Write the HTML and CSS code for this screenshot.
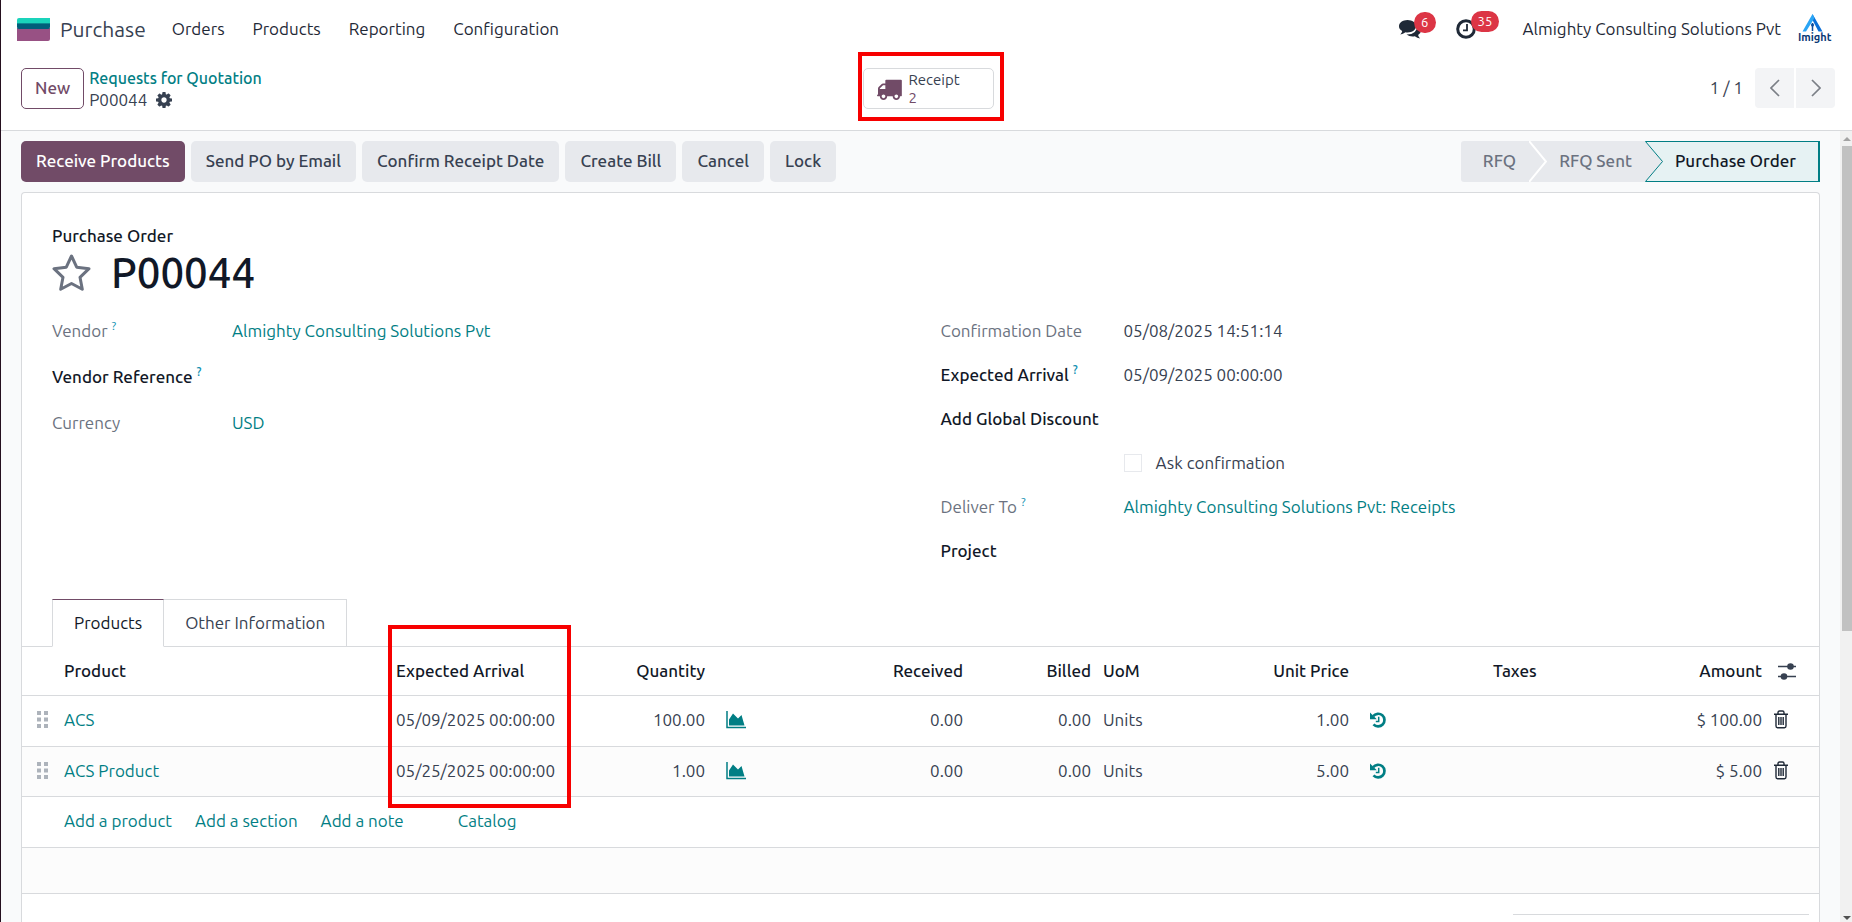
FILE: index.html
```html
<!DOCTYPE html>
<html lang="en">
<head>
<meta charset="utf-8">
<title>P00044 - Purchase</title>
<link rel="stylesheet" href="styles.css">
</head>
<body>
<svg class="defs" aria-hidden="true">
  <symbol id="i-area" viewBox="0 0 20 18"><path d="M1 0v16.500h19" fill="none" stroke="currentColor" stroke-width="1.500"/><path d="M3 14.500V8.500L7 2.500l5 5 3.500-3.500 3 10.500z" fill="currentColor"/></symbol>
  <symbol id="i-history" viewBox="0 0 16 18"><path d="M3.200 5.200A6.300 6.300 0 1 1 3.500 13.300" fill="none" stroke="currentColor" stroke-width="2.700"/><path d="M0 1.500v6.800h6.800z" fill="currentColor"/><path d="M8.700 5.800v4.700H5.800" fill="none" stroke="currentColor" stroke-width="1.500"/></symbol>
  <symbol id="i-trash" viewBox="0 0 14 19"><path d="M0 4.200h14M2 4.500V16q0 1.700 1.500 1.700h7q1.500 0 1.500-1.700V4.500M4 4V2.500Q4 1 5.500 1h3Q10 1 10 2.500V4M4.800 7v8M7 7v8M9.200 7v8" fill="none" stroke="currentColor" stroke-width="1.400"/></symbol>
  <symbol id="i-drag" viewBox="0 0 11 17"><path d="M0 0h4v4H0zM7 0h4v4H7zM0 6.500h4v4H0zM7 6.500h4v4H7zM0 13h4v4H0zM7 13h4v4H7z" fill="currentColor"/></symbol>
</svg>
<div class="app">
  <header class="navbar">
    <a class="brand" href="#">
      <svg class="brand-logo" viewBox="0 0 33 23" aria-hidden="true"><path d="M0 10h33v11q0 2-2 2H0z" fill="#985184"/><path d="M2 0h31v6H0V2q0-2 2-2z" fill="#1ad3bb"/><path d="M0 5h33v4q0 2-2 2H2q-2 0-2-2z" fill="#005e7a"/><path d="M0 5h33v1H0z" fill="#0b8a92"/></svg>
      <span>Purchase</span>
    </a>
    <nav class="menu">
      <a href="#">Orders</a><a href="#">Products</a><a href="#">Reporting</a><a href="#">Configuration</a>
    </nav>
    <div class="systray">
      <button class="tray chat" aria-label="Messages">
        <svg viewBox="0 0 22 19" aria-hidden="true"><path d="M8.500 0C13.300 0 17 2.800 17 6.300s-3.700 6.200-8.500 6.200q-1 0-2-.2Q4 14.300 1.300 14.500q1.700-1.500 1.900-3.400Q0 9.300 0 6.300C0 2.800 3.700 0 8.500 0z" fill="currentColor"/><path d="M18.500 5.500Q22 7 22 10.500q0 2.700-2.900 4.600.3 2 2 3.400-2.900-.2-5.300-2.200-5 .8-8.300-1.800 10.500.2 11-9z" fill="currentColor"/></svg>
        <span class="badge">6</span>
      </button>
      <button class="tray clock" aria-label="Activities">
        <svg viewBox="0 0 20 20" aria-hidden="true"><circle cx="10" cy="10" r="8.300" fill="none" stroke="currentColor" stroke-width="3"/><path d="M11 5v6.300H7" fill="none" stroke="currentColor" stroke-width="1.800"/></svg>
        <span class="badge">35</span>
      </button>
      <span class="company">Almighty Consulting Solutions Pvt</span>
      <button class="avatar" aria-label="User menu">
        <svg viewBox="0 0 34 30" aria-hidden="true"><path d="M14.500 0 24.500 17.500h-4L14.500 6z" fill="#0a6fd8"/><path d="M14.500 0 16.500 4 8 17.500H4.500z" fill="#2aa5f5"/><path d="M14.500 9v8" stroke="#0a4b9c" stroke-width="1.500"/><circle cx="14.500" cy="11" r="1.500" fill="#0a4b9c"/><text x="0" y="27" class="avatar-text">Imight</text></svg>
      </button>
    </div>
  </header>

  <div class="control">
    <div class="control-left">
      <button class="btn-new">New</button>
      <div class="crumbs">
        <a href="#">Requests for Quotation</a>
        <div class="crumb-now"><span>P00044</span>
          <button class="gear" aria-label="Actions"><svg viewBox="0 -128 1536 1536" aria-hidden="true"><path fill="currentColor" fill-rule="evenodd" d="M1024 640q0 106-75 181t-181 75-181-75-75-181 75-181 181-75 181 75 75 181zM1536 531v222q0 12-8 23t-20 13l-185 28q-19 54-39 91 35 50 107 138 10 12 10 25t-9 23q-27 37-99 108t-94 71q-12 0-26-9l-138-108q-44 23-91 38-16 136-29 186-7 28-36 28h-222q-14 0-24.500-8.500t-11.500-21.500l-28-184q-49-16-90-37l-141 107q-10 9-25 9-14 0-25-11-126-114-165-168-7-10-7-23 0-12 8-23 15-21 51-66.500t54-70.500q-27-50-41-99l-183-27q-13-2-21-12.500t-8-23.500v-222q0-12 8-23t19-13l186-28q14-46 39-92-40-57-107-138-10-12-10-24 0-10 9-23 26-36 98.500-107.500t94.500-71.500q13 0 26 10l138 107q44-23 91-38 16-136 29-186 7-28 36-28h222q14 0 24.500 8.500t11.500 21.500l28 184q49 16 90 37l142-107q9-9 24-9 13 0 25 10 129 119 165 170 7 8 7 22 0 12-8 23-15 21-51 66.500t-54 70.500q26 50 41 98l183 28q13 2 21 12.500t8 23.500z"/></svg></button>
        </div>
      </div>
    </div>
    <button class="stat">
      <svg viewBox="0 128 1792 1536" aria-hidden="true"><path fill="currentColor" d="M640 1408q0-52-38-90t-90-38-90 38-38 90 38 90 90 38 90-38 38-90zm-384-512h384v-256h-158q-13 0-22 9l-195 195q-9 9-9 22v30zm1280 512q0-52-38-90t-90-38-90 38-38 90 38 90 90 38 90-38 38-90zm256-1088v1024q0 15-4 26.500t-13.500 18.500-16.500 11.500-23.500 6-22.500 2-25.500 0-22.500-.500q0 106-75 181t-181 75-181-75-75-181h-384q0 106-75 181t-181 75-181-75-75-181h-64q-3 0-22.500.500t-25.500 0-22.500-2-23.500-6-16.500-11.500-13.500-18.500-4-26.500q0-26 19-45t45-19v-320q0-8-.500-35t0-38 2.500-34.500 6.500-37 14-30.500 22.500-30l198-198q19-19 50.500-32t58.500-13h160v-192q0-26 19-45t45-19h1024q26 0 45 19t19 45z"/></svg>
      <span class="stat-text"><span>Receipt</span><span class="stat-value">2</span></span>
    </button>
    <div class="pager">
      <span>1 / 1</span>
      <button class="prev" aria-label="Previous"><svg viewBox="0 0 10 18" aria-hidden="true"><path d="M9 1 1 9l8 8" fill="none" stroke="currentColor" stroke-width="1.700"/></svg></button>
      <button class="next" aria-label="Next"><svg viewBox="0 0 10 18" aria-hidden="true"><path d="m1 1 8 8-8 8" fill="none" stroke="currentColor" stroke-width="1.700"/></svg></button>
    </div>
  </div>

  <div class="content">
    <main class="form">
      <div class="statusrow">
        <div class="actions">
          <button class="btn primary">Receive Products</button>
          <button class="btn">Send PO by Email</button>
          <button class="btn">Confirm Receipt Date</button>
          <button class="btn">Create Bill</button>
          <button class="btn">Cancel</button>
          <button class="btn">Lock</button>
        </div>
        <div class="stages">
          <button class="stage first">RFQ</button>
          <svg class="chevron" viewBox="0 0 18 41" preserveAspectRatio="none" aria-hidden="true"><path d="M0 0h18v41H0z" fill="#e7e9ed"/><path d="M0 0l17 20.500L0 41" fill="none" stroke="#fff" stroke-width="2"/></svg>
          <button class="stage">RFQ Sent</button>
          <svg class="chevron" viewBox="0 0 18 41" preserveAspectRatio="none" aria-hidden="true"><path d="M0 0h18v41H0z" fill="#e6f2f3"/><path d="M0 0l17.500 20.500L0 41z" fill="#e7e9ed"/><path d="M18 .500H.500L17.500 20.500.500 40.500H18" fill="none" stroke="#017e84" stroke-width="1"/></svg>
          <button class="stage current" aria-current="step">Purchase Order</button>
        </div>
      </div>

      <section class="sheet">
        <div class="sheet-body">
          <div class="doc-type">Purchase Order</div>
          <div class="title-row">
            <button class="star" aria-label="Priority"><svg viewBox="0 0 39 39" aria-hidden="true"><path d="M19.500 2l5.200 11.200 12.300 1.500-9 8.600 2.300 12-10.800-5.800-10.800 5.800 2.300-12-9-8.600 12.300-1.500z" fill="none" stroke="currentColor" stroke-width="3" stroke-linejoin="round"/></svg></button>
            <h1>P00044</h1>
          </div>
          <div class="groups">
            <dl class="group left">
              <dt class="muted">Vendor <sup>?</sup></dt><dd><a href="#">Almighty Consulting Solutions Pvt</a></dd>
              <dt>Vendor Reference <sup>?</sup></dt><dd></dd>
              <dt class="muted">Currency</dt><dd><a href="#">USD</a></dd>
            </dl>
            <dl class="group right">
              <dt class="muted">Confirmation Date</dt><dd>05/08/2025 14:51:14</dd>
              <dt>Expected Arrival <sup>?</sup></dt><dd>05/09/2025 00:00:00</dd>
              <dt>Add Global Discount</dt><dd></dd>
              <dt></dt><dd><label class="check"><input type="checkbox">Ask confirmation</label></dd>
              <dt class="muted">Deliver To <sup>?</sup></dt><dd><a href="#">Almighty Consulting Solutions Pvt: Receipts</a></dd>
              <dt>Project</dt><dd></dd>
            </dl>
          </div>
        </div>
        <div class="tabs" role="tablist">
          <button class="tab active" role="tab" aria-selected="true">Products</button>
          <button class="tab" role="tab" aria-selected="false">Other Information</button>
        </div>
        <table class="lines">
          <colgroup><col class="c-drag"><col><col class="c-date"><col class="c-qty"><col class="c-chart"><col class="c-recv"><col class="c-bill"><col class="c-uom"><col class="c-price"><col class="c-hist"><col class="c-tax"><col class="c-amt"><col class="c-act"></colgroup>
          <thead><tr>
            <th></th><th>Product</th><th class="marked">Expected Arrival</th><th class="num">Quantity</th><th></th><th class="num">Received</th><th class="num">Billed</th><th>UoM</th><th class="num">Unit Price</th><th></th><th>Taxes</th><th class="num">Amount</th>
            <th class="icon"><button class="icon-btn" aria-label="Optional columns"><svg class="sliders" viewBox="0 0 18 19" aria-hidden="true"><path d="M0 4.500h18M0 14.500h18" stroke="currentColor" stroke-width="1.600"/><circle cx="12.500" cy="4.500" r="3.300" fill="currentColor"/><circle cx="6" cy="14.500" r="3.300" fill="currentColor"/></svg></button></th>
          </tr></thead>
          <tbody>
            <tr>
              <td class="drag"><svg aria-hidden="true"><use href="#i-drag"/></svg></td><td><a href="#">ACS</a></td><td>05/09/2025 00:00:00</td><td class="num">100.00</td><td class="tool"><button class="icon-btn" aria-label="Forecast"><svg class="area"><use href="#i-area"/></svg></button></td><td class="num">0.00</td><td class="num">0.00</td><td>Units</td><td class="num">1.00</td><td class="tool"><button class="icon-btn" aria-label="Price history"><svg class="history"><use href="#i-history"/></svg></button></td><td></td><td class="num">$ 100.00</td><td class="bin"><button class="icon-btn" aria-label="Delete"><svg class="trash"><use href="#i-trash"/></svg></button></td>
            </tr>
            <tr class="odd">
              <td class="drag"><svg aria-hidden="true"><use href="#i-drag"/></svg></td><td><a href="#">ACS Product</a></td><td>05/25/2025 00:00:00</td><td class="num">1.00</td><td class="tool"><button class="icon-btn" aria-label="Forecast"><svg class="area"><use href="#i-area"/></svg></button></td><td class="num">0.00</td><td class="num">0.00</td><td>Units</td><td class="num">5.00</td><td class="tool"><button class="icon-btn" aria-label="Price history"><svg class="history"><use href="#i-history"/></svg></button></td><td></td><td class="num">$ 5.00</td><td class="bin"><button class="icon-btn" aria-label="Delete"><svg class="trash"><use href="#i-trash"/></svg></button></td>
            </tr>
            <tr><td></td><td colspan="12"><div class="adders"><a href="#">Add a product</a><a href="#">Add a section</a><a href="#">Add a note</a><a class="catalog" href="#">Catalog</a></div></td></tr>
            <tr class="odd blank"><td colspan="13"></td></tr>
          </tbody>
        </table>
        <div class="totals"></div>
      </section>
    </main>
    <div class="scroll" aria-hidden="true"><span class="arrow up"></span><span class="thumb"></span><span class="arrow down"></span></div>
  </div>
</div>
</body>
</html>
```
FILE: styles.css
```css
*, *::after { box-sizing: border-box; }
body {
  margin: 0;
  font: 17px/24px Ubuntu, "Noto Sans", sans-serif;
  color: #374151;
  background: #fff;
}
a { color: #017e84; text-decoration: none; }
button { font: inherit; color: inherit; border: 0; background: none; padding: 0; cursor: pointer; }
svg { display: block; }
.defs { position: absolute; width: 0; height: 0; }

.app {
  display: flex;
  flex-direction: column;
  height: 100vh;
  overflow: hidden;
  border-left: 1px solid #240f1e;
}

/* Top bar */
.navbar { display: flex; align-items: center; height: 58px; flex: none; padding: 0 20px 0 16px; }
.brand { display: flex; align-items: center; gap: 10px; font-size: 21px; color: #374151; }
.brand-logo { width: 33px; height: 23px; }
.menu { display: flex; gap: 28px; margin-left: 26px; }
.menu a, .company { color: #1f2937; }
.systray { display: flex; align-items: center; margin-left: auto; }
.tray { position: relative; color: #1f2937; }
.chat { width: 22px; margin-right: 35px; }
.clock { width: 20px; margin-right: 47px; }
.badge {
  position: absolute;
  left: 15px;
  top: -8px;
  min-width: 22px;
  height: 21px;
  padding: 0 7px;
  border-radius: 11px;
  background: #dc3545;
  color: #fff;
  font-size: 13px;
  line-height: 21px;
}
.avatar { width: 34px; height: 30px; margin-left: 17px; }
.avatar-text { font: bold 11px Ubuntu, sans-serif; fill: #0b3a75; }

/* Control panel */
.control {
  display: grid;
  grid-template-columns: 1fr auto 1fr;
  align-items: start;
  flex: none;
  height: 73px;
  padding: 10px 17px 0 20px;
  border-bottom: 1px solid #d8dadd;
}
.control-left { display: flex; gap: 5px; }
.btn-new { height: 41px; padding: 0 13px 2px; border: 1px solid #714b67; border-radius: 5px; color: #714b67; font-weight: 500; }
.crumbs { display: flex; flex-direction: column; line-height: 21px; }
.crumbs a { font-size: 16px; font-weight: 500; }
.crumb-now { display: flex; align-items: center; gap: 9px; }
.gear svg { width: 16px; height: 16px; }
.stat {
  position: relative;
  display: flex;
  align-items: center;
  gap: 7px;
  width: 131px;
  height: 41px;
  padding-left: 12px;
  border: 1px solid #d8dadd;
  border-radius: 5px;
  color: #714b67;
  font-size: 15px;
  line-height: 18px;
  text-align: left;
}
.stat::after { content: ""; position: absolute; inset: -17px -11px -13px -6px; border: 4px solid #f70000; }
.stat svg { width: 26px; height: 22px; }
.stat-text { display: flex; flex-direction: column; color: #374151; }
.stat-value { color: #714b67; }
.pager { display: flex; align-items: center; justify-content: flex-end; gap: 2px; }
.pager span { margin-right: 10px; }
.pager button { display: grid; place-items: center; width: 39px; height: 40px; background: #f3f4f6; color: #7b7f86; }
.pager svg { width: 10px; height: 18px; }
.prev { border-radius: 4px 0 0 4px; }
.next { border-radius: 0 4px 4px 0; }

/* Form */
.content { display: flex; flex: 1; min-height: 0; background: #f9fafb; }
.form { flex: 1; min-width: 0; padding: 10px 20px 0; overflow: hidden; display: flex; flex-direction: column; }
.statusrow { display: flex; justify-content: space-between; flex: none; margin-bottom: 10px; }
.actions { display: flex; gap: 6px; }
.btn { height: 41px; padding: 0 15px 1px; border-radius: 5px; background: #e7e9ed; font-weight: 500; }
.btn.primary { background: #714b67; color: #fff; }
.stages { display: flex; }
.stage { height: 41px; padding: 0 13px 1px 12px; background: #e7e9ed; color: #6b7280; font-weight: 500; }
.stage.first { padding: 0 13px 1px 22px; border-radius: 3px 0 0 3px; }
.stage.current { padding: 0 22px 1px 12px; background: #e6f2f3; border: 1px solid #017e84; border-width: 1px 2px 1px 0; color: #111827; }
.chevron { width: 18px; height: 41px; }

.sheet { flex: 1; background: #fff; border: 1px solid #d8dadd; border-bottom: 0; border-radius: 4px 4px 0 0; }
.sheet-body { padding: 31px 30px 0; height: 406px; }
.doc-type { color: #111827; font-weight: 500; }
.title-row { display: flex; align-items: center; gap: 20px; height: 50px; }
.star { width: 39px; color: #6b7280; }
h1 { margin: 0; font-size: 42px; line-height: 50px; font-weight: 500; color: #111827; }
.groups { display: grid; grid-template-columns: 1fr 1fr; padding-top: 21px; }
.group { display: grid; margin: 0; align-content: start; }
.left { grid-template-columns: 180px 1fr; row-gap: 22px; }
.right { grid-template-columns: 183px 1fr; row-gap: 20px; padding-left: 20px; }
dt { color: #111827; font-weight: 500; white-space: nowrap; }
dt.muted { color: #6b7280; font-weight: 400; }
dd { margin: 0; }
sup { font-size: 12px; line-height: 0; color: #0d8fb0; vertical-align: 7px; }
.check { display: flex; align-items: center; gap: 14px; }
.check input { appearance: none; width: 18px; height: 18px; margin: 0; border: 1px solid #e7e9ed; }

/* Notebook */
.tabs { display: flex; padding: 0 30px; margin-bottom: -1px; position: relative; }
.tab { height: 48px; padding: 0 21px; border: 1px solid #d8dadd; border-left: 0; background: #fff; }
.tab.active { border-left: 1px solid #d8dadd; border-top-color: #714b67; border-bottom-color: #fff; color: #111827; }
.lines { width: 100%; table-layout: fixed; border-collapse: collapse; border-top: 1px solid #d8dadd; }
.lines th { position: relative; height: 49px; padding: 0 6px; text-align: left; font-weight: 500; color: #111827; white-space: nowrap; }
.lines td { height: 51px; padding: 0 6px 3px; white-space: nowrap; }
.lines tr { border-bottom: 1px solid #d8dadd; }
.lines .num { text-align: right; }
.lines .odd { background: #fcfcfc; }
.lines .odd td { height: 50px; padding-bottom: 2px; }
.lines .blank td { height: 46px; }
.lines td.drag { padding-left: 15px; color: #adb3bb; }
.drag svg { width: 11px; height: 17px; }
.lines td.tool { padding-left: 15px; }
.icon-btn { display: block; color: #017e84; }
.area { width: 20px; height: 18px; }
.history { width: 16px; height: 18px; }
.trash { width: 14px; height: 19px; color: #1f2937; }
.lines th.icon { padding-left: 10px; }
.sliders { width: 18px; height: 19px; color: #374151; }
.marked::after { content: ""; position: absolute; left: -2px; top: -22px; width: 183px; height: 183px; border: 4px solid #f70000; z-index: 1; }
.c-drag { width: 36px; }
.c-date { width: 180px; }
.c-qty { width: 141px; }
.c-chart { width: 100px; }
.c-recv { width: 158px; }
.c-bill { width: 128px; }
.c-uom { width: 130px; }
.c-price { width: 128px; }
.c-hist { width: 132px; }
.c-tax { width: 140px; }
.c-amt { width: 141px; }
.c-act { width: 51px; }
.adders { display: flex; gap: 23px; }
.catalog { margin-left: 31px; }
.totals { width: 296px; margin: 20px 10px 0 auto; border-top: 1px solid #d8dadd; }

/* Scroll track */
.scroll { display: flex; flex-direction: column; width: 12px; padding: 6px 0 2px 2px; background: #f1f1f1; }
.arrow { border: 4px solid transparent; width: 8px; height: 0; align-self: center; }
.up { border-top: 0; border-bottom: 4px solid #a3a3a3; }
.down { border-bottom: 0; border-top: 4px solid #505050; margin-top: auto; }
.thumb { margin-top: 5px; height: 62%; background: #c1c1c1; }
```
